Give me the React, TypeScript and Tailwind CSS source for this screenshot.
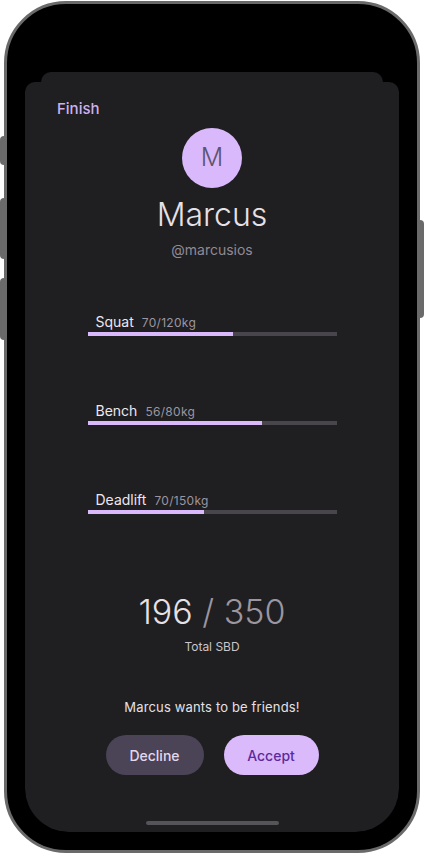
const lifts = [
  { name: "Squat", done: 70, goal: 120 },
  { name: "Bench", done: 56, goal: 80 },
  { name: "Deadlift", done: 70, goal: 150 },
];

const LiftRow = ({ name, done, goal }: { name: string; done: number; goal: number }) => {
  return (
    <div className="w-[249px] self-center">
      <div className="flex items-baseline gap-[8px] pl-2 h-[20px]">
        <span className="text-[14px] leading-[20px] font-normal text-[#ece7f0]">{name}</span>
        <span className="text-[12px] leading-[20px] text-[#9b96a0] tracking-[0.3px]">
          {done}/{goal}kg
        </span>
      </div>
      <div className="h-[4px] w-full bg-[#48464c]">
        <div className="h-full bg-[#d9b9fb]" style={{ width: `${(done / goal) * 100}%` }} />
      </div>
    </div>
  );
};

export default function App() {
  return (
    <div
      className="relative w-[425px] h-[856px] bg-white overflow-hidden"
      style={{ fontFamily: "Inter, 'Noto Sans', sans-serif" }}
    >
      {/* side buttons */}
      <span className="absolute left-0 top-[136px] w-[4px] h-[29px] rounded-l-sm bg-[#6a6a6a]" />
      <span className="absolute left-0 top-[198px] w-[4px] h-[61px] rounded-l-sm bg-[#6a6a6a]" />
      <span className="absolute left-0 top-[278px] w-[4px] h-[62px] rounded-l-sm bg-[#6a6a6a]" />
      <span className="absolute right-[1px] top-[220px] w-[4px] h-[98px] rounded-r-sm bg-[#6a6a6a]" />

      <div className="ml-[4px] mt-[1px] w-[416px] h-[852px] rounded-[62px] border-[3px] border-[#6a6a6a] bg-black p-[18px] flex flex-col">
        <div className="flex-1 flex flex-col pt-[50px] rounded-[44px] overflow-hidden">
          <div className="mx-[16px] h-[10px] rounded-t-[10px] bg-[#1f1e21]" />
          <div className="flex-1 flex flex-col bg-[#1f1e21] rounded-t-[10px] rounded-b-[42px]">
            <div className="pt-[14px] pl-[32px]">
              <button className="text-[15px] leading-[20px] font-medium text-[#cdb1ef]">Finish</button>
            </div>

            <div className="mt-[8px] self-center w-[60px] h-[60px] rounded-full bg-[#d9b9fb] flex items-center justify-center">
              <span className="text-[25px] font-light text-[#5d5470]">M</span>
            </div>
            <p className="mt-[7px] text-center text-[32px] leading-[40px] font-light text-[#e6e1e5]">Marcus</p>
            <p className="mt-[5px] text-center text-[14px] leading-[20px] text-[#8f8a94]">@marcusios</p>

            <div className="mt-[52px] flex flex-col gap-[65px]">
              {lifts.map((l) => (
                <LiftRow key={l.name} {...l} />
              ))}
            </div>

            <p className="mt-[78px] text-center text-[34px] leading-[40px] font-light text-[#e6e1e5]">
              196 <span className="text-[#9b969f]">/ 350</span>
            </p>
            <p className="mt-[7px] text-center text-[12px] leading-[16px] text-[#c9c5ca]">Total SBD</p>

            <p className="mt-[43px] text-center text-[13px] leading-[18px] tracking-[0.15px] text-[#e6e1e5]">
              Marcus wants to be friends!
            </p>

            <div className="mt-[19px] flex justify-center gap-[20px]">
              <button className="w-[98px] h-[40px] rounded-full bg-[#4b4356] text-[14px] font-medium text-[#e2d9ef]">
                Decline
              </button>
              <button className="w-[95px] h-[40px] rounded-full bg-[#dbbafc] text-[14px] font-medium text-[#5b2a9c]">
                Accept
              </button>
            </div>

            <div className="mt-auto mb-[7px] self-center w-[133px] h-[4px] rounded-full bg-[#555458]" />
          </div>
        </div>
      </div>
    </div>
  );
}
